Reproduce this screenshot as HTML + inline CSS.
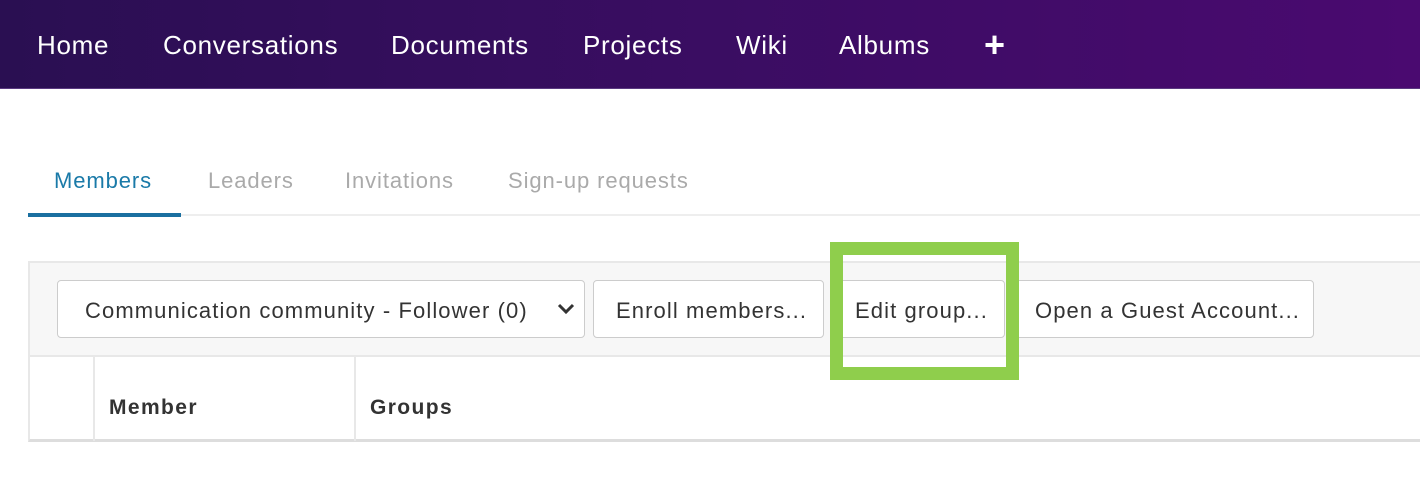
<!DOCTYPE html>
<html><head><style>
*{margin:0;padding:0;box-sizing:border-box}
body{width:1420px;height:492px;background:#fff;font-family:"Liberation Sans",sans-serif;position:relative;overflow:hidden}
.nav{position:absolute;left:0;top:0;width:1420px;height:89px;background:linear-gradient(90deg,#2a0f52 0%,#3a0d62 50%,#4a0a70 100%);border-bottom:1px solid #5a3a80}
.nav span{position:absolute;top:30px;color:#fff;font-size:26px;letter-spacing:0.7px}
.tab{position:absolute;top:168px;font-size:22px;color:#aaa;letter-spacing:0.9px}
.btn{position:absolute;top:280px;height:58px;background:#fff;border:1px solid #ccc;border-radius:4px;font-size:22px;color:#333;line-height:60px;padding-left:27px;letter-spacing:1.1px;white-space:nowrap}
.th{position:absolute;top:396px;font-size:21px;font-weight:bold;color:#333;letter-spacing:1.4px}
</style></head><body>
<div class="nav">
<span style="left:37px">Home</span>
<span style="left:163px">Conversations</span>
<span style="left:391px">Documents</span>
<span style="left:583px">Projects</span>
<span style="left:736px">Wiki</span>
<span style="left:839px">Albums</span>
<span style="left:984px;top:24px;font-size:36px;font-weight:bold">+</span>
</div>
<div class="tab" style="left:54px;color:#1a7aa8">Members</div>
<div class="tab" style="left:208px">Leaders</div>
<div class="tab" style="left:345px">Invitations</div>
<div class="tab" style="left:508px">Sign-up requests</div>
<div style="position:absolute;left:28px;top:214px;width:1392px;height:2px;background:#eee"></div>
<div style="position:absolute;left:28px;top:213px;width:153px;height:4px;background:#1a6fa0"></div>
<div style="position:absolute;left:28px;top:261px;width:1400px;height:96px;background:#f7f7f7;border:2px solid #e8e8e8;border-right:none"></div>
<div class="btn" style="left:57px;width:528px">Communication community - Follower (0)<svg style="position:absolute;right:8px;top:21px" width="20" height="14" viewBox="0 0 20 14"><path d="M3 3 L10 10 L17 3" stroke="#333" stroke-width="3" fill="none"/></svg></div>
<div class="btn" style="left:593px;width:231px;padding-left:22px">Enroll members...</div>
<div class="btn" style="left:832px;width:173px;padding-left:22px">Edit group...</div>
<div class="btn" style="left:1013px;width:301px;padding-left:21px">Open a Guest Account...</div>
<div style="position:absolute;left:28px;top:356px;width:1400px;height:86px;border-left:2px solid #e8e8e8;border-bottom:3px solid #ddd"></div>
<div style="position:absolute;left:93px;top:356px;width:2px;height:85px;background:#e8e8e8"></div>
<div style="position:absolute;left:354px;top:356px;width:2px;height:85px;background:#e8e8e8"></div>
<div class="th" style="left:109px">Member</div>
<div class="th" style="left:370px">Groups</div>
<div style="position:absolute;left:830px;top:242px;width:189px;height:138px;border:13px solid #8fce4c"></div>
</body></html>
